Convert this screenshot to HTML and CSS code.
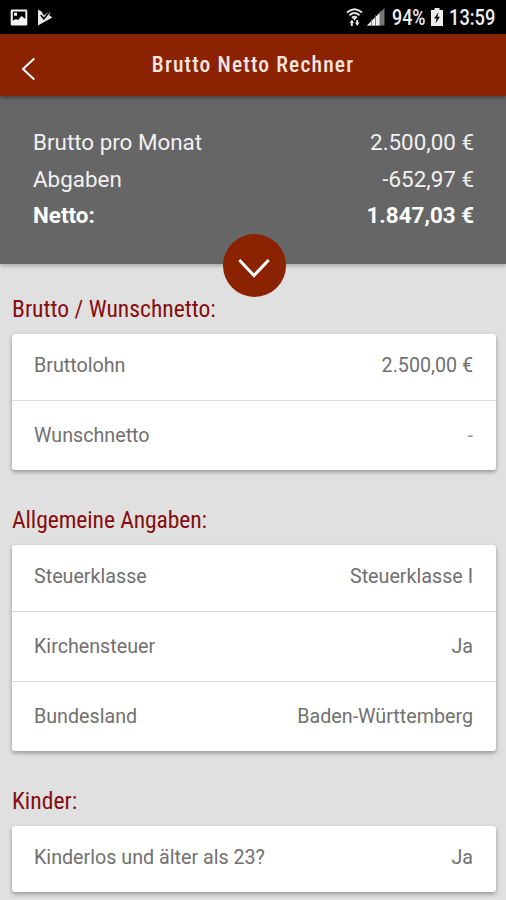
FILE: index.html
```html
<!DOCTYPE html>
<html lang="de">
<head>
<meta charset="utf-8">
<title>Brutto Netto Rechner</title>
<link rel="stylesheet" href="styles.css">
</head>
<body>
<div class="status">
  <div class="status-group">
    <svg width="18" height="17" viewBox="0 0 18 17"><path fill="#f4f4f4" fill-rule="evenodd" d="M2 0.5h14q1.3 0 1.3 1.3v13.4q0 1.3-1.3 1.3H2q-1.3 0-1.3-1.3V1.800Q.7.500 2 .500ZM2.800 2.600v9l3.200-1.600 2 1 3.500-4 3.800 3V2.600ZM4 3.800h3v3H4Z"/></svg>
    <svg class="play" width="16" height="17" viewBox="0 0 16 17"><path fill="#e8e8e8" d="M1 .5 4.500 2.500 7 6.500 12 2.500 13.500 4 12 6l3.300 2.500L1 16.500Z"/><path d="m3.800 6 3 3.800L12.500 3" fill="none" stroke="#000" stroke-width="1.500"/></svg>
  </div>
  <div class="status-group">
    <svg width="17" height="19" viewBox="0 0 17 19"><g fill="none" stroke="#e6e6e6" stroke-width="1.900"><path d="M1 4.500q7.500-6.500 15 0"/><path d="M3.500 7.200q5-4.200 10 0"/><path d="M6 9.700q2.500-2 5 0"/></g><path fill="#e6e6e6" d="M6.500 10h4l-2 2.500ZM3.500 15 6 11.500 8 15H6.800v3H4.800v-3ZM9 14.500h1.200V12h2v2.500h1.300L11.200 18Z"/></svg>
    <svg class="signal" width="18" height="18" viewBox="0 0 18 18"><path fill="#777" d="M0 17.500 17.500 0v17.500Z"/><path fill="#eee" d="M0 17.500 13 4.500v13Z"/><path stroke="#666" stroke-width=".8" d="M4.500 11v7M8.500 7v11M13 3v15"/></svg>
    <span class="fit pct">94%</span>
    <svg class="battery" width="12" height="18" viewBox="0 0 12 18"><path fill="#eee" d="M3.500 0h5v2H12v16H0V2h3.500Z"/><path fill="#111" d="M7.500 4 3 10.500h2.500L4.500 15.500 9 8.800H6.500Z"/></svg>
    <span class="fit clock">13:59</span>
  </div>
</div>
<header class="appbar">
  <svg class="back" width="16" height="24" viewBox="0 0 16 24"><path d="M13.300 1.500 2 12l11.300 10.500" fill="none" stroke="#fff" stroke-width="2"/></svg>
  <h1>Brutto Netto Rechner</h1>
</header>
<section class="summary">
  <div class="line"><span>Brutto pro Monat</span><span>2.500,00 €</span></div>
  <div class="line"><span>Abgaben</span><span>-652,97 €</span></div>
  <div class="line total"><span>Netto:</span><span>1.847,03 €</span></div>
  <div class="toggle"><svg width="34" height="22" viewBox="0 0 34 22"><path d="M2.300 2 17 17.500 31.700 2" fill="none" stroke="#fff" stroke-width="3"/></svg></div>
</section>
<main>
  <h2>Brutto / Wunschnetto:</h2>
  <div class="card">
    <div class="row"><span>Bruttolohn</span><span class="value">2.500,00 €</span></div>
    <div class="row"><span>Wunschnetto</span><span class="value dash">-</span></div>
  </div>
  <h2 class="tight">Allgemeine Angaben:</h2>
  <div class="card">
    <div class="row"><span>Steuerklasse</span><span class="value">Steuerklasse I</span></div>
    <div class="row"><span>Kirchensteuer</span><span class="value">Ja</span></div>
    <div class="row"><span>Bundesland</span><span class="value">Baden-Württemberg</span></div>
  </div>
  <h2>Kinder:</h2>
  <div class="card">
    <div class="row"><span>Kinderlos und älter als 23?</span><span class="value">Ja</span></div>
  </div>
</main>
</body>
</html>
```
FILE: styles.css
```css
* { box-sizing: border-box; }
body {
  margin: 0;
  height: 900px;
  overflow: hidden;
  background: #e0e0e0;
  font-family: Roboto, "Liberation Sans", sans-serif;
}
svg { display: block; flex: none; }
.status {
  height: 34px;
  padding: 0 11px 0 10px;
  background: #000;
  color: #f0f0f0;
  display: flex;
  justify-content: space-between;
  align-items: center;
}
.status-group { display: flex; align-items: center; }
.play { margin-left: 9px; }
.signal { margin-left: 4px; }
.fit {
  font-size: 21.500px;
  font-weight: 500;
  line-height: 34px;
  padding-top: 2px;
  transform-origin: left center;
}
.pct { width: 34px; margin-left: 7px; transform: scaleX(.83); }
.battery { margin-left: 5px; }
.clock { width: 46px; margin-left: 6px; transform: scaleX(.85); }
.appbar {
  height: 62px;
  background: #8b2302;
  display: grid;
  grid-template-columns: 48px 1fr 48px;
  align-items: center;
  position: relative;
  z-index: 1;
  box-shadow: 0 1px 5px rgba(0, 0, 0, .5);
}
.back { margin: 8px 0 0 21px; }
h1 {
  margin: 0;
  color: #f8e6e0;
  font-family: "Roboto Condensed", Roboto, sans-serif;
  font-stretch: 75%;
  font-size: 21.500px;
  font-weight: 500;
  letter-spacing: 1.150px;
  line-height: 62px;
  text-align: center;
  white-space: nowrap;
}
.summary {
  height: 168px;
  padding: 28px 32px 0 33px;
  background: #666;
  color: #f1f1f1;
  position: relative;
  box-shadow: 0 2px 4px rgba(0, 0, 0, .25);
}
.line {
  height: 36.500px;
  line-height: 36px;
  font-size: 22.400px;
  display: flex;
  justify-content: space-between;
}
.total { font-weight: 700; color: #fff; }
.toggle {
  position: absolute;
  left: 223px;
  bottom: -33px;
  width: 63px;
  height: 63px;
  border-radius: 50%;
  background: #8b2302;
  display: grid;
  place-items: center;
}
.toggle svg { margin: 6px 2px 0 0; }
main { padding: 25px 10px 0 12px; }
h2 {
  margin: 0;
  height: 45px;
  line-height: 41px;
  color: #860d0d;
  font-family: "Roboto Condensed", Roboto, sans-serif;
  font-stretch: 75%;
  font-size: 23.600px;
  font-weight: 400;
  white-space: nowrap;
}
.tight { letter-spacing: -.100px; }
.card {
  margin-bottom: 30px;
  background: #fff;
  border-radius: 3px;
  box-shadow: 0 2px 4px rgba(0, 0, 0, .35);
}
.row {
  height: 66px;
  padding: 0 23px 3px 22px;
  color: #707070;
  font-size: 19.700px;
  display: flex;
  justify-content: space-between;
  align-items: center;
}
.row + .row { height: 70px; padding-bottom: 0; border-top: 1px solid #dcdcdc; }
.dash { color: #999; }
```
